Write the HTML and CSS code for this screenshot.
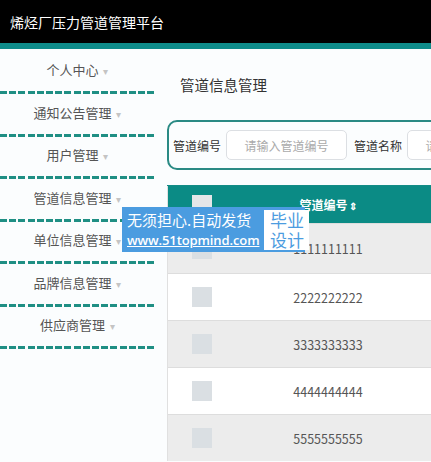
FILE: index.html
```html
<!DOCTYPE html>
<html lang="zh">
<head>
  <meta charset="UTF-8" />
  <title>烯烃厂压力管道管理平台</title>
  <link rel="stylesheet" href="styles.css">
</head>
<body>
  <!-- Cabecera -->
  <header class="top">烯烃厂压力管道管理平台</header>

  <div class="layout">
    <!-- Menú lateral -->
    <ul class="menu">
      <li>个人中心 <span class="caret">▾</span></li>
      <li>通知公告管理 <span class="caret">▾</span></li>
      <li>用户管理 <span class="caret">▾</span></li>
      <li>管道信息管理 <span class="caret">▾</span></li>
      <li>单位信息管理 <span class="caret">▾</span></li>
      <li>品牌信息管理 <span class="caret">▾</span></li>
      <li>供应商管理 <span class="caret">▾</span></li>
    </ul>

    <!-- Contenido -->
    <main class="main">
      <h2 class="title">管道信息管理</h2>

      <div class="search">
        <label>管道编号</label>
        <input class="campo" placeholder="请输入管道编号">
        <label>管道名称</label>
        <input class="campo" placeholder="请输入管道名称">
      </div>

      <table class="tabla">
        <thead>
          <tr>
            <th class="col-check"><span class="check"></span></th>
            <th class="col-num">管道编号<span class="sort">⇕</span></th>
            <th class="col-rest"></th>
          </tr>
        </thead>
        <tbody id="filas"></tbody>
      </table>

      <!-- Marca de agua -->
      <div class="badge">
        <div class="badge-text">
          <div>无须担心.自动发货</div>
          <div class="badge-url">www.51topmind.com</div>
        </div>
        <div class="badge-box">毕业<br>设计</div>
      </div>
    </main>
  </div>

  <script>
    // Filas de la tabla
    const cuerpo = document.getElementById("filas");
    for (let i = 1; i <= 5; i++) {
      let tr = document.createElement("tr");
      tr.innerHTML = `
        <td class="col-check"><span class="check"></span></td>
        <td class="col-num">${String(i).repeat(10)}</td>
        <td class="col-rest"></td>
      `;
      cuerpo.appendChild(tr);
    }
  </script>
</body>
</html>
```

FILE: styles.css
```css
/* Estilos generales */
body {
  margin: 0;
  font-family: "Noto Sans CJK SC", "Liberation Sans", sans-serif;
  background-color: #fbfdfe;
  color: #333;
  overflow: hidden;
}

.top {
  height: 43px;
  line-height: 44px;
  padding-left: 10px;
  background-color: #000;
  color: #fff;
  font-size: 14px;
  border-bottom: 6px solid #0e8c8a;
}

.layout {
  display: flex;
}

.menu {
  list-style: none;
  margin: 0;
  padding: 0;
  width: 155px;
  flex: none;
  margin-right: 12px;
  padding-top: 3px;
}

.menu li {
  height: 39px;
  line-height: 35px;
  text-align: center;
  font-size: 13px;
  color: #555;
  margin-bottom: 0.5px;
  background-image: repeating-linear-gradient(to right, #1f8f84 0 7px, transparent 7px 9.2px);
  background-size: 100% 3px;
  background-position: left bottom;
  background-repeat: no-repeat;
  padding-bottom: 3px;
}

.caret {
  color: #c4c4c4;
  font-size: 10px;
  margin-left: 2px;
}

.main {
  position: relative;
  flex: 1;
  min-width: 0;
}

.title {
  margin: 26px 0 0 13px;
  font-size: 14.5px;
  font-weight: normal;
  line-height: 20px;
  color: #333;
}

.search {
  display: flex;
  align-items: center;
  gap: 5px;
  margin-top: 25px;
  height: 46px;
  width: 330px;
  padding-left: 4px;
  border: 2px solid #2a8a84;
  border-radius: 10px;
  white-space: nowrap;
}

.search label {
  font-size: 12px;
  color: #333;
}

.search label + .campo + label {
  margin-left: 2px;
}

.campo {
  width: 121px;
  height: 30px;
  box-sizing: border-box;
  border: 1px solid #dcdfe3;
  border-radius: 5px;
  font-family: inherit;
  font-size: 12px;
  text-align: center;
  flex: none;
}

.campo::placeholder {
  color: #aaa;
}

.tabla {
  margin-top: 15px;
  border-collapse: collapse;
  width: 420px;
  table-layout: fixed;
}

.tabla th {
  height: 35px;
  background-color: #0b8b85;
  color: #fff;
  font-size: 12px;
  font-weight: bold;
  border-top: 1px solid #138c86;
}

.tabla td {
  height: 44px;
  font-size: 12.5px;
  color: #555;
  text-align: center;
  border-top: 1px solid #dddddd;
}

.tabla tbody tr:nth-child(odd) {
  background-color: #ececec;
}

.tabla tbody tr:nth-child(even) {
  background-color: #fff;
}

.tabla tbody tr:first-child td {
  height: 47px;
}

.col-check {
  width: 68px;
  border-left: 1px solid #e0e0e0;
}

.col-num {
  width: 178px;
}

.check {
  display: block;
  width: 20px;
  height: 20px;
  margin: 0 auto 0 23px;
  background-color: #dadfe3;
}

th .check {
  background-color: #e4e6e8;
}

.sort {
  font-size: 10px;
  margin-left: 1px;
}

/* Marca de agua */
.badge {
  position: absolute;
  left: -45px;
  top: 158px;
  display: flex;
  align-items: center;
  gap: 5px;
  width: 183px;
  height: 45px;
  box-sizing: border-box;
  padding: 2px 3px 2px 5px;
  background-color: #4b9ce0;
}

.badge-text {
  flex: 1;
  color: #fff;
  font-size: 15px;
  line-height: 20px;
  white-space: nowrap;
}

.badge-url {
  font-family: "Open Sans", "Liberation Sans", sans-serif;
  font-size: 13px;
  font-weight: 600;
  letter-spacing: -0.1px;
  text-decoration: underline;
}

.badge-box {
  width: 45px;
  flex: none;
  height: 40px;
  background-color: #fff;
  color: #4b9ce0;
  font-size: 17px;
  line-height: 20px;
  text-align: center;
}
```
